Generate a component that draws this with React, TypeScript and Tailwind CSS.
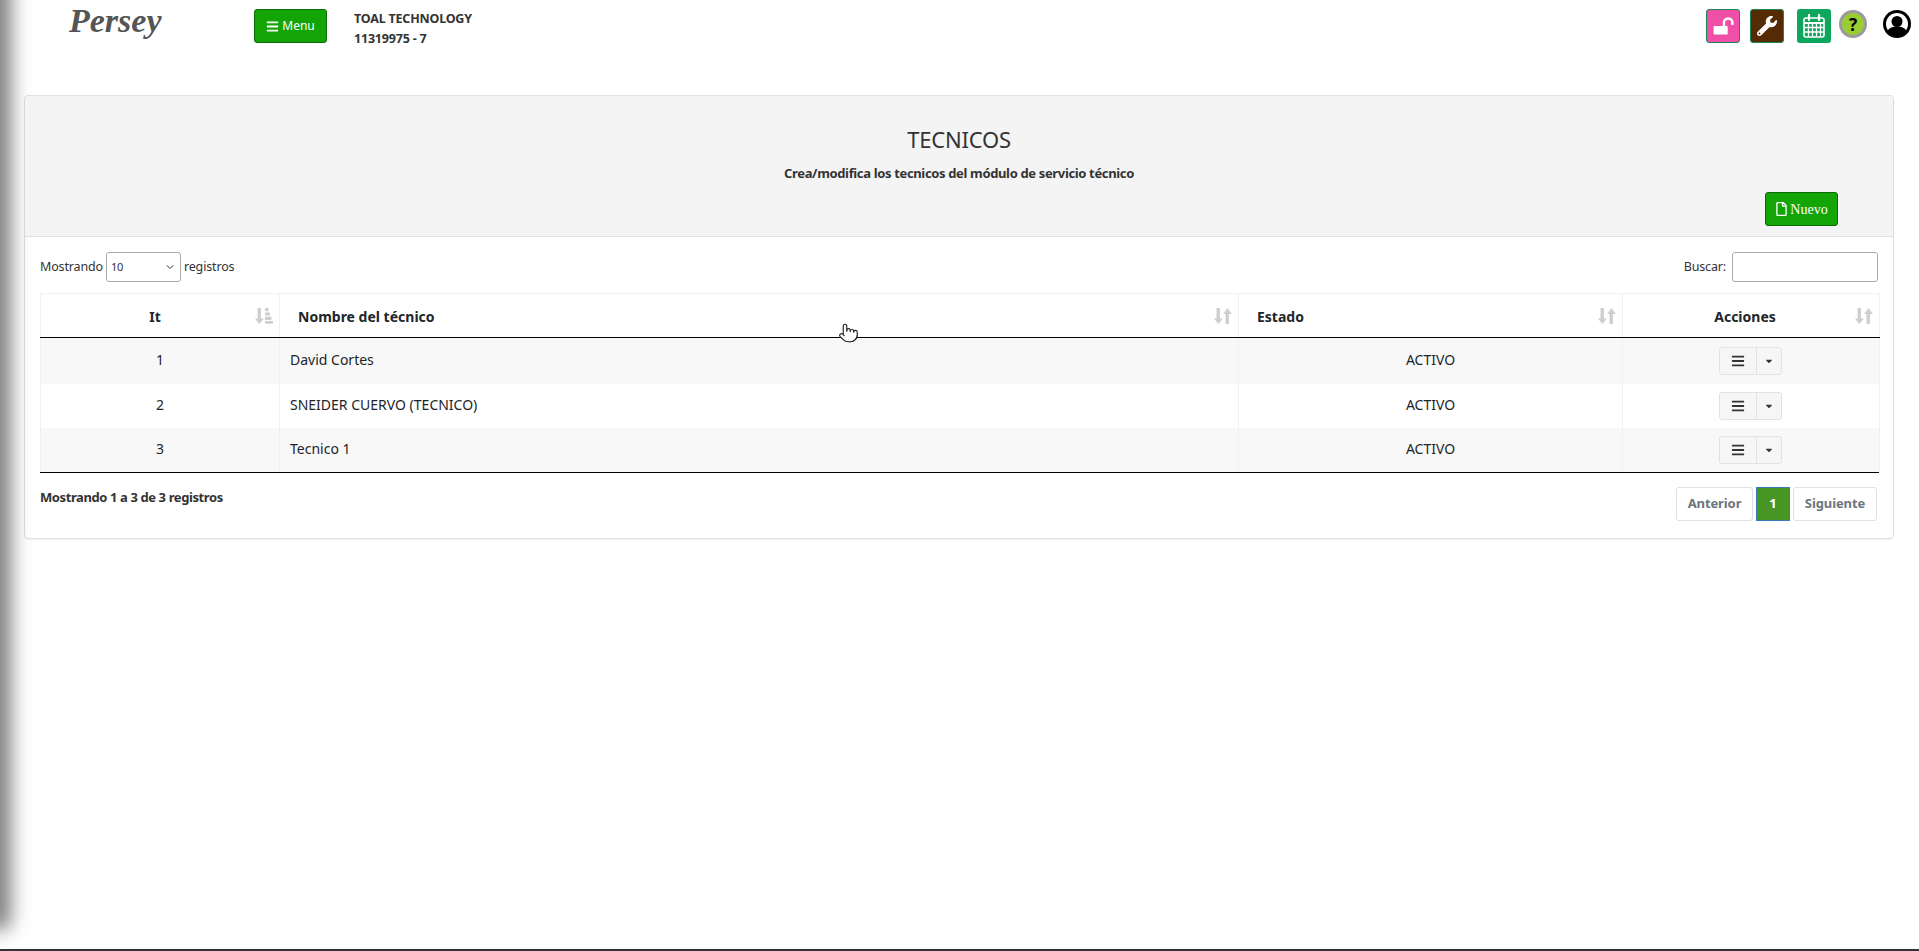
import { FaBars, FaRegFile, FaWrench, FaCaretDown } from 'react-icons/fa'
import { Pointer, ChevronDown } from 'lucide-react'

const rows = [
  { it: 1, name: 'David Cortes', striped: true, h: 'h-[46px]' },
  { it: 2, name: 'SNEIDER CUERVO (TECNICO)', striped: false, h: 'h-[44px]' },
  { it: 3, name: 'Tecnico 1', striped: true, h: 'h-[44px]' },
]

function SortBoth() {
  return (
    <svg viewBox="0 0 18 18" className="w-[18px] h-[18px] text-[#cfcfcf]" fill="currentColor">
      <path d="M2.500 1h3.500v10.500h3L4.250 17 0 11.500h2.500z" />
      <path d="M11.500 17H15V7h3l-4.500-6L9 7h2.500z" />
    </svg>
  )
}

function SortAsc() {
  return (
    <svg viewBox="0 0 18 18" className="w-[18px] h-[18px] text-[#cfcfcf]" fill="currentColor">
      <path d="M2.500 1h3.500v10.500h3L4.250 17 0 11.500h2.500z" />
      <path d="M10 1h3.500v3.200H10zM10 5.400h5v3.200h-5zM10 9.800h6.500V13H10zM10 14h8v2.800h-8z" />
    </svg>
  )
}

function LockOpenIcon() {
  return (
    <svg viewBox="0 0 34 34" className="w-[32px] h-[32px]">
      <rect x="7" y="17" width="15" height="9" rx="1" fill="white" />
      <path d="M18 17v-3.500a4.500 4.500 0 0 1 9 0v2.500" fill="none" stroke="white" strokeWidth="2.600" />
    </svg>
  )
}

function CalendarIcon() {
  return (
    <svg viewBox="0 0 22 24" className="w-[22px] h-[24px]" fill="none" stroke="white">
      <rect x="1" y="4" width="20" height="19" rx="2" strokeWidth="1.600" />
      <path d="M6 1v5M16 1v5" strokeWidth="2.200" strokeLinecap="round" />
      <path d="M1 9h20" strokeWidth="2" />
      <path d="M1 13.500h20M1 18h20M5.500 9v14M9.500 9v14M13.500 9v14M17.500 9v14" strokeWidth="1.300" />
    </svg>
  )
}

function UserRingIcon() {
  return (
    <svg viewBox="0 0 28 28" className="ml-[16px] mt-[1px] w-[28px] h-[28px]">
      <circle cx="14" cy="14" r="14" fill="black" />
      <circle cx="14" cy="14" r="11" fill="white" />
      <circle cx="14" cy="11.500" r="5.500" fill="black" />
      <path d="M4.500 21c2-3.500 5.500-4.500 9.500-4.500s7.500 1 9.500 4.500a11 11 0 0 1-19 0z" fill="black" />
    </svg>
  )
}

export default function App() {
  return (
    <div className="relative min-h-[951px] bg-white text-[#212529] font-['Noto_Sans',sans-serif] text-[14px] overflow-hidden">
      {/* sidebar shadow on the left edge */}
      <div className="absolute -left-[6px] top-[-20px] w-[6px] h-[940px] rounded-b-full shadow-[0_0_20px_10px_rgba(0,0,0,0.55)]" />

      <header className="flex items-start h-[95px]">
        <div className="w-[254px] pl-[69px]">
          <span className="block font-['Liberation_Serif',serif] font-bold italic text-[34px] leading-[42px] text-[#555555]">Persey</span>
        </div>
        <button className="mt-[9px] w-[73px] h-[34px] flex items-center justify-center gap-[3px] rounded-[3px] bg-[#12a505] border border-[#0d6b06] text-white text-[12px]">
          <FaBars className="w-[13px] h-[13px]" /> Menu
        </button>
        <div className="ml-[27px] mt-[9px] font-bold text-[12.5px] tracking-[-0.2px] leading-[20px] text-[#333333]">
          <div>TOAL TECHNOLOGY</div>
          <div>11319975 - 7</div>
        </div>
        <div className="ml-auto flex items-start mt-[9px] pr-[8px]">
          <div className="w-[34px] h-[34px] flex items-center justify-center rounded-[3px] bg-[#f04fa8] border border-[#198754]">
            <LockOpenIcon />
          </div>
          <div className="ml-[10px] w-[34px] h-[34px] flex items-center justify-center rounded-[3px] bg-[#552b05] border border-[#198754] text-white">
            <FaWrench className="w-[20px] h-[20px]" />
          </div>
          <div className="ml-[13px] w-[34px] h-[34px] flex items-center justify-center rounded-[3px] bg-[#0ea55c]">
            <CalendarIcon />
          </div>
          <div className="ml-[8px] mt-[1px] w-[28px] h-[28px] flex items-center justify-center rounded-full bg-[#9acd32] border-[3px] border-[#9a9aa0] text-black text-[17px] font-bold leading-none">?</div>
          <UserRingIcon />
        </div>
      </header>

      <section className="mx-[24px] w-[1870px] rounded-[4px] border border-[#dfdfdf] shadow-[0_1px_2px_rgba(0,0,0,0.05)]">
        <div className="relative h-[141px] bg-[#f4f4f4] border-b border-[#dfdfdf] rounded-t-[4px] pt-[27px] text-center">
          <h1 className="text-[22px] tracking-[-0.2px] leading-[32px] font-normal text-[#333333]">TECNICOS</h1>
          <p className="mt-[9px] font-bold text-[13px] tracking-[-0.35px] leading-[18px] text-[#333333]">Crea/modifica los tecnicos del módulo de servicio técnico</p>
          <button className="absolute right-[55px] top-[96px] w-[73px] h-[34px] flex items-center justify-center gap-[2px] rounded-[3px] bg-[#12a505] border border-[#0d6b06] text-white font-['Liberation_Serif',serif] text-[14px]">
            <FaRegFile className="w-[13px] h-[14px]" /> Nuevo
          </button>
        </div>

        <div className="px-[15px] pt-[15px] pb-[17px]">
          <div className="flex items-center justify-between h-[30px] text-[12.5px] tracking-[-0.15px] text-[#333333]">
            <div className="flex items-center gap-[3px]">
              Mostrando
              <div className="w-[75px] h-[30px] flex items-center justify-between border border-[#aaaaaa] rounded-[3px] px-[4px] text-[11px]">
                10 <ChevronDown className="w-[12px] h-[12px]" />
              </div>
              registros
            </div>
            <div className="flex items-center gap-[6px]">
              Buscar:
              <input className="w-[146px] h-[30px] border border-[#aaaaaa] rounded-[3px] bg-white" />
            </div>
          </div>

          <table className="mt-[11px] w-[1839px] table-fixed border-collapse">
            <thead>
              <tr className="h-[44px] border-b-[1.5px] border-black text-[14px] font-bold">
                <th className="w-[239px] border border-[#f1f1f1] border-b-black relative text-center pr-[10px] pt-[2px]">
                  It
                  <span className="absolute right-[6px] top-[13px]"><SortAsc /></span>
                </th>
                <th className="w-[959px] border border-[#f1f1f1] border-b-black relative text-left pl-[18px] pt-[2px]">
                  Nombre del técnico
                  <span className="absolute right-[6px] top-[13px]"><SortBoth /></span>
                </th>
                <th className="w-[384px] border border-[#f1f1f1] border-b-black relative text-left pl-[18px] pt-[2px]">
                  Estado
                  <span className="absolute right-[6px] top-[13px]"><SortBoth /></span>
                </th>
                <th className="w-[257px] border border-[#f1f1f1] border-b-black relative text-center pr-[12px] pt-[2px]">
                  Acciones
                  <span className="absolute right-[6px] top-[13px]"><SortBoth /></span>
                </th>
              </tr>
            </thead>
            <tbody className="text-[14px]">
              {rows.map((r) => (
                <tr key={r.it} className={`${r.h} ${r.striped ? 'bg-[#f8f8f8]' : 'bg-white'}`}>
                  <td className="border-x border-[#f1f1f1] text-center pb-[2px]">{r.it}</td>
                  <td className="border-x border-[#f1f1f1] pl-[10px] pb-[2px]">{r.name}</td>
                  <td className="border-x border-[#f1f1f1] text-center pb-[2px]">ACTIVO</td>
                  <td className="border-x border-[#f1f1f1] pr-[2px]">
                    <div className="mx-auto w-[63px] h-[28px] flex rounded-[3px] border border-[#e2e2e2] bg-[#f6f6f6] text-[#333333]">
                      <div className="w-[37px] flex items-center justify-center border-r border-[#e2e2e2]">
                        <FaBars className="w-[14px] h-[14px]" />
                      </div>
                      <div className="flex-1 flex items-center justify-center">
                        <FaCaretDown className="w-[10px] h-[10px]" />
                      </div>
                    </div>
                  </td>
                </tr>
              ))}
            </tbody>
          </table>
          <div className="w-[1839px] border-t-[1.5px] border-black" />

          <div className="flex items-start justify-between mt-[14px]">
            <div className="mt-[1px] font-bold text-[13px] tracking-[-0.4px] leading-[18px] text-[#333333]">Mostrando 1 a 3 de 3 registros</div>
            <div className="flex items-center gap-[3px] pr-[1px] text-[13px] font-bold tracking-[-0.1px] text-[#6c757d]">
              <div className="w-[77px] h-[34px] flex items-center justify-center rounded-[3px] border border-[#dfdfdf]">Anterior</div>
              <div className="w-[34px] h-[34px] flex items-center justify-center border border-[#3b7bbf] bg-[#489524] text-white">1</div>
              <div className="w-[84px] h-[34px] flex items-center justify-center rounded-[3px] border border-[#dfdfdf]">Siguiente</div>
            </div>
          </div>
        </div>
      </section>

      {/* mouse cursor captured in the screenshot */}
      <Pointer className="absolute left-[838px] top-[320px] w-[21px] h-[26px] text-[#222222] fill-white" strokeWidth={1.300} />

      <div className="absolute left-0 right-0 bottom-0 h-[2px] bg-[#333333]" />
    </div>
  )
}
